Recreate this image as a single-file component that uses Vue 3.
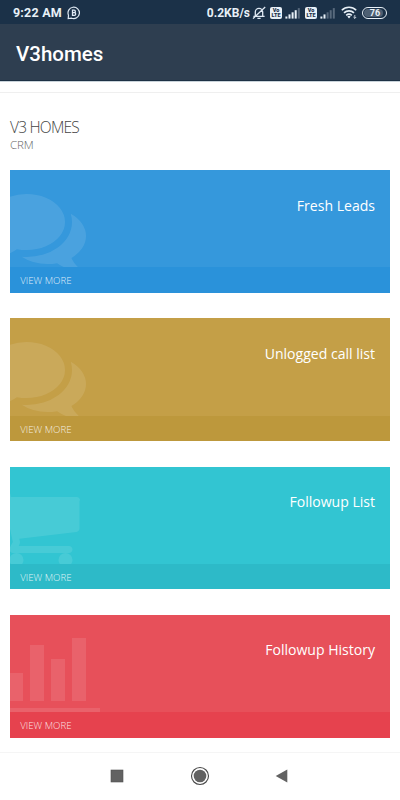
<script setup>
import { ref } from 'vue';

const comments = {
  width: 1792,
  path: 'M1408 768q0 139-94 257t-256.5 186.5-353.5 68.5q-86 0-176-16-124 88-278 128-36 9-86 16h-3q-11 0-20.5-8t-11.5-21q-1-3-1-6.5t.5-6.5 2-6l2.5-5 3.5-5.5 4-5 4.5-5 4-4.5q5-6 23-25t26-29.5 22.5-29 25-38.5 20.5-44q-124-72-195-177t-71-224q0-139 94-257t256.5-186.5 353.5-68.5 353.5 68.5 256.5 186.5 94 257zm384 256q0 120-71 224.5t-195 176.5q10 24 20.5 44t25 38.5 22.5 29 26 29.5 23 25q1 1 4 4.5t4.5 5 4 5 3.5 5.5l2.5 5 2 6 .5 6.5-1 6.5q-3 14-13 22t-22 7q-50-7-86-16-154-40-278-128-90 16-176 16-271 0-472-132 58 4 88 4 161 0 309-45t264-129q125-92 192-212t67-254q0-77-23-152 129 71 204 178t75 230z'
};

const cart = {
  width: 1792,
  path: 'M704 1536q0 52-38 90t-90 38-90-38-38-90 38-90 90-38 90 38 38 90zm896 0q0 52-38 90t-90 38-90-38-38-90 38-90 90-38 90 38 38 90zm128-1088v512q0 24-16.5 42.5t-40.5 21.5l-1044 122q13 60 13 70 0 16-24 64h920q26 0 45 19t19 45-19 45-45 19h-1024q-26 0-45-19t-19-45q0-11 8-31.5t16-36 21.5-40 15.5-29.5l-177-823h-204q-26 0-45-19t-19-45 19-45 45-19h256q30 0 50 20t28 52l12 56h1201q26 0 45 19t19 45z'
};

const chart = {
  width: 2048,
  path: 'M640 896v512h-256v-512h256zm384-512v1024h-256v-1024h256zm1024 1152v128h-2048v-1536h128v1408h1920zm-640-384v256h-256v-768h256v512zm384-896v1152h-256v-1152h256z'
};

const cards = ref([
  { title: 'Fresh Leads', color: 'blue', icon: comments },
  { title: 'Unlogged call list', color: 'gold', icon: comments },
  { title: 'Followup List', color: 'teal', icon: cart },
  { title: 'Followup History', color: 'red', icon: chart }
]);

// bars that are lit on each SIM
const sims = ref([4, 2]);
</script>

<template>
  <div class="screen">
    <header class="status-bar">
      <span class="clock">9:22 AM</span>
      <svg class="business" width="14" height="14" viewBox="0 0 14 14" fill="none" stroke="#dfe9f3">
        <path d="M1.2 12.6l.3-3.4A5.7 5.7 0 1 1 4.6 12.2z" stroke-width="1.2" />
        <path d="M5.5 4.2h1.6a1.2 1.2 0 0 1 0 2.5H5.5zM5.5 6.7h1.9a1.3 1.3 0 0 1 0 2.6H5.5z" stroke-width="1.3" />
      </svg>
      <span class="speed">0.2KB/s</span>
      <svg class="mute" width="14" height="14" viewBox="0 0 14 14" fill="none" stroke="#dfe9f3" stroke-width="1.3">
        <path d="M1.4 10.4h11.2M3.3 10V6a3.7 3.7 0 0 1 7.4 0v4M5.4 12.4h3.2M13.2 1L1 12.6" />
      </svg>
      <template v-for="(lit, index) in sims" :key="index">
        <span class="volte"><span>Vo</span><span>LTE</span></span>
        <svg class="signal" width="16" height="12" viewBox="0 0 16 12">
          <rect
            v-for="n in 5"
            :key="n"
            :x="(n - 1) * 3.1 + 0.4"
            :y="11.6 - n * 2.1"
            width="2"
            :height="n * 2.1"
            fill="#e8f0f7"
            :opacity="n <= lit ? 1 : 0.3"
          />
        </svg>
      </template>
      <svg class="wifi" width="16" height="13" viewBox="0 0 16 13" fill="none" stroke="#e8f0f7" stroke-width="1.6">
        <path d="M.8 4.2a10.3 10.3 0 0 1 14.4 0M3 6.9a7.2 7.2 0 0 1 10 0M5.2 9.4a4.2 4.2 0 0 1 5.6 0" />
        <path d="M6.3 10.6L8 12.6l1.7-2a2.4 2.4 0 0 0-3.4 0z" fill="#e8f0f7" stroke="none" />
        <path d="M13.8 9v3.4M12.4 11l1.4 1.4 1.4-1.4" stroke-width=".8" />
      </svg>
      <span class="battery"><span class="level">76</span></span>
    </header>

    <div class="app-bar">V3homes</div>
    <div class="strip"></div>

    <main class="content">
      <h1 class="heading">V3 HOMES</h1>
      <p class="subheading">CRM</p>

      <div class="cards">
        <section v-for="card in cards" :key="card.title" class="card" :class="card.color">
          <div class="card-body">
            <svg class="card-icon" :viewBox="`0 0 ${card.icon.width} 1792`" :width="card.icon.width * 98 / 1792" height="98">
              <path :d="card.icon.path" />
            </svg>
            <h2 class="card-title">{{ card.title }}</h2>
          </div>
          <div class="card-footer">VIEW MORE</div>
        </section>
      </div>
    </main>

    <nav class="nav-bar">
      <svg width="20" height="20" viewBox="0 0 20 20"><rect x="4" y="4" width="12" height="12" fill="#626262" stroke="#505050" stroke-width=".6" /></svg>
      <svg width="20" height="20" viewBox="0 0 20 20">
        <circle cx="10" cy="10" r="8.5" fill="none" stroke="#484848" stroke-width="1.1" />
        <circle cx="10" cy="10" r="6.3" fill="#626262" />
      </svg>
      <svg width="20" height="20" viewBox="0 0 20 20"><path d="M2.7 10L14.3 3.4v13.2z" fill="#626262" /></svg>
    </nav>
  </div>
</template>

<style>
body {
  margin: 0;
  background: #fff;
}
</style>

<style scoped>
.screen {
  display: flex;
  flex-direction: column;
  width: 400px;
  height: 800px;
  overflow: hidden;
  background: #fff;
  font-family: 'Open Sans', 'Noto Sans', sans-serif;
}

.status-bar {
  display: flex;
  align-items: center;
  flex-shrink: 0;
  box-sizing: border-box;
  height: 24px;
  padding: 1px 13px 0;
  background: #1b3148;
  color: #e8f0f7;
  font-family: Roboto, sans-serif;
}

.clock {
  width: 49px;
  font-size: 12.5px;
  font-weight: 700;
  letter-spacing: 0.2px;
  white-space: nowrap;
}

.business {
  margin-left: 5px;
}

.speed {
  margin-left: auto;
  font-size: 12px;
  font-weight: 700;
}

.mute {
  margin-left: 2px;
}

.volte {
  display: flex;
  flex-direction: column;
  justify-content: center;
  align-items: center;
  width: 12px;
  height: 12px;
  margin-left: 4px;
  border-radius: 2px;
  background: #e8f0f7;
  color: #1b3148;
  font-size: 5.5px;
  font-weight: 900;
  line-height: 5px;
}

.signal {
  margin-left: 3px;
}

.signal + .volte {
  margin-left: 4px;
}

.wifi {
  margin-left: 5px;
}

.battery {
  box-sizing: border-box;
  width: 25px;
  height: 12px;
  margin-left: 5px;
  padding: 1px;
  border: 1px solid #e8f0f7;
  border-radius: 6px;
}

.level {
  display: block;
  width: 16px;
  height: 8px;
  padding-left: 3px;
  border-radius: 4px;
  background: #4d5f72;
  font-size: 9px;
  font-weight: 700;
  line-height: 8.5px;
  text-align: center;
}

.app-bar {
  flex-shrink: 0;
  box-sizing: border-box;
  height: 57px;
  padding-left: 16px;
  border-bottom: 1px solid #1d3044;
  background: #2e3e50;
  color: #fff;
  font-family: Roboto, sans-serif;
  font-size: 20.5px;
  font-weight: 500;
  line-height: 60px;
}

.strip {
  flex-shrink: 0;
  box-sizing: border-box;
  height: 12px;
  border-top: 1px solid #c9d3da;
  border-bottom: 1px solid #efefef;
}

.content {
  flex: 1;
  padding: 25px 9.6px 0 10.4px;
}

.heading {
  height: 19px;
  margin: 0 0 0 -0.3px;
  color: #444;
  font-size: 15.5px;
  font-weight: 300;
  letter-spacing: -0.8px;
  line-height: 19px;
}

.subheading {
  height: 15px;
  margin: 0 0 18.3px -0.3px;
  color: #666;
  font-size: 11.5px;
  font-weight: 300;
  letter-spacing: -0.2px;
  line-height: 15px;
}

.cards {
  display: flex;
  flex-direction: column;
  gap: 25.4px;
}

.card {
  display: flex;
  flex-direction: column;
  height: 122.8px;
  color: #fff;
}

.card-body {
  display: flex;
  flex-shrink: 0;
  justify-content: space-between;
  height: 97.1px;
  overflow: hidden;
}

.card-icon {
  flex-shrink: 0;
  margin: 9.5px 0 0 -22.2px;
  fill: #fff;
  opacity: 0.1;
}

.teal .card-icon {
  margin-left: -25.6px;
}

.card-title {
  margin: 25.6px 15.4px 0 0;
  font-size: 14.05px;
  font-weight: 400;
  line-height: 19px;
  white-space: nowrap;
}

.card-footer {
  flex: 1;
  padding: 2px 0 0 9.8px;
  color: rgba(255, 255, 255, 0.85);
  font-size: 9.7px;
  font-weight: 300;
  line-height: 23.6px;
}

.blue {
  background: #3598dc;
}

.blue .card-footer {
  background: #2a92da;
}

.gold {
  background: #c49f47;
}

.gold .card-footer {
  background: #bd983c;
}

.teal {
  background: #32c5d2;
}

.teal .card-footer {
  background: #2dbac8;
}

.red {
  background: #e7505a;
}

.red .card-footer {
  background: #e6424e;
}

.nav-bar {
  display: flex;
  align-items: center;
  flex-shrink: 0;
  box-sizing: border-box;
  gap: 63px;
  height: 48px;
  padding: 0 0 2px 107px;
  border-top: 1px solid #f5f5f5;
}
</style>
